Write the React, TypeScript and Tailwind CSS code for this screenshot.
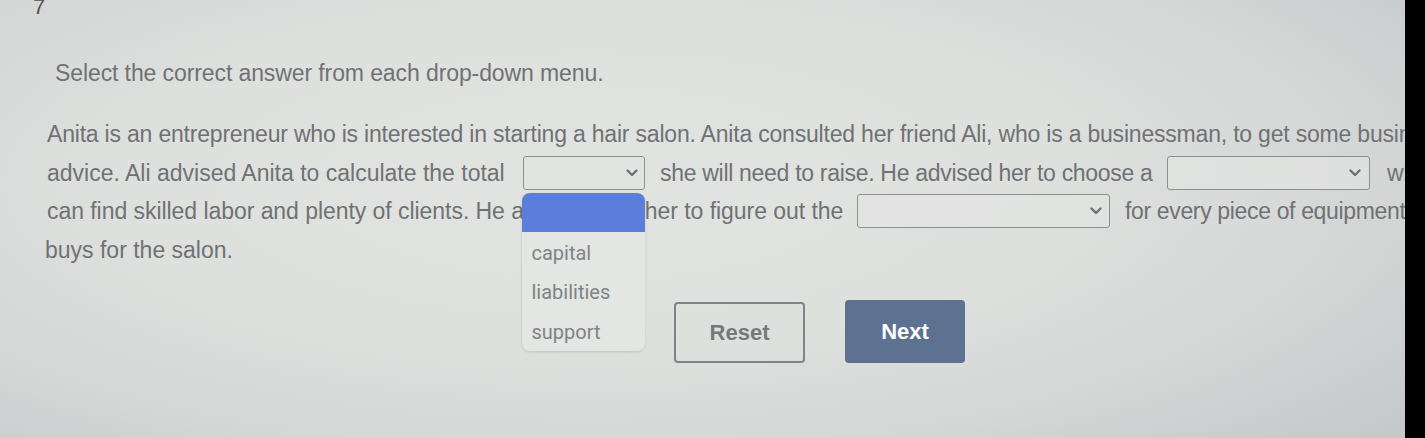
import React from "react";

function Chevron() {
  return (
    <svg width="12" height="8" viewBox="0 0 12 8" className="shrink-0">
      <path d="M1.5 1.5 L6 6 L10.5 1.5" fill="none" stroke="#6f7274" strokeWidth="2.4" strokeLinecap="round" strokeLinejoin="round" />
    </svg>
  );
}

function Select({ w, chevronRight }: { w: string; chevronRight: string }) {
  return (
    <div className={`${w} h-[34px] shrink-0 flex items-center justify-end border-[1.5px] border-[#8d9092] rounded-[3px] bg-[#e2e4e2]/70`}>
      <span className={chevronRight}>
        <Chevron />
      </span>
    </div>
  );
}

export default function App() {
  return (
    <div className="w-[1425px] h-[438px] flex overflow-hidden font-['Liberation_Sans',Arial,sans-serif] text-[#6f7274]">
      <div className="relative w-[1405px] h-full overflow-hidden bg-[radial-gradient(ellipse_75%_85%_at_42%_42%,#e2e4e2_0%,#dee0de_45%,#d3d6d5_75%,#c6c9ca_100%)]">
        <div className="h-[16px] pl-[33px] text-[22px] leading-[13px] text-[#505355]">7</div>
        <p className="mt-[42px] pl-[55px] text-[23px] leading-[30px] whitespace-nowrap tracking-[-0.1px]">
          Select the correct answer from each drop-down menu.
        </p>
        <div className="mt-[27px] pl-[47px] text-[23px] whitespace-nowrap">
          <div className="h-[38.5px] flex items-center tracking-[-0.2px]">
            Anita is an entrepreneur who is interested in starting a hair salon. Anita consulted her friend Ali, who is a businessman, to get some business
          </div>
          <div className="h-[38.5px] flex items-center">
            <span className="w-[476px] shrink-0">advice. Ali advised Anita to calculate the total</span>
            <div className="relative shrink-0">
              <Select w="w-[122px]" chevronRight="mr-[6px]" />
              <div className="absolute left-[-1.5px] top-[37px] w-[123px] z-10 rounded-[8px] bg-[#e4e6e4] shadow-[0_1px_3px_rgba(0,0,0,0.12)] font-['Roboto',sans-serif] text-[20px] text-[#808385]">
                <div className="h-[39px] rounded-t-[8px] bg-[#5b7edb]" />
                <div className="pt-[1px]">
                  <div className="h-[39.5px] flex items-center pl-[10px]">capital</div>
                  <div className="h-[39.5px] flex items-center pl-[10px]">liabilities</div>
                  <div className="h-[39.5px] flex items-center pl-[10px]">support</div>
                </div>
              </div>
            </div>
            <span className="w-[522px] shrink-0 pl-[15px] tracking-[-0.3px]">she will need to raise. He advised her to choose a</span>
            <Select w="w-[203px]" chevronRight="mr-[8px]" />
            <span className="pl-[17px]">who</span>
          </div>
          <div className="h-[38.5px] flex items-center">
            <span className="w-[810px] shrink-0 tracking-[-0.05px]">can find skilled labor and plenty of clients. He also advised her to figure out the</span>
            <Select w="w-[253px]" chevronRight="mr-[7px]" />
            <span className="pl-[15px] tracking-[-0.35px]">for every piece of equipment she</span>
          </div>
          <div className="h-[38.5px] flex items-center -ml-[2px]">buys for the salon.</div>
        </div>
        <div className="mt-[31px] flex items-start pl-[674px] gap-[40px]">
          <button className="mt-[2px] w-[131px] h-[61px] border-[2px] border-[#7f8489] rounded-[4px] bg-transparent text-[22px] font-bold text-[#76797c]">
            Reset
          </button>
          <button className="w-[120px] h-[63px] rounded-[4px] bg-[#5c7290] text-[22px] font-bold text-white">
            Next
          </button>
        </div>
      </div>
      <div className="w-[20px] h-full bg-black" />
    </div>
  );
}
